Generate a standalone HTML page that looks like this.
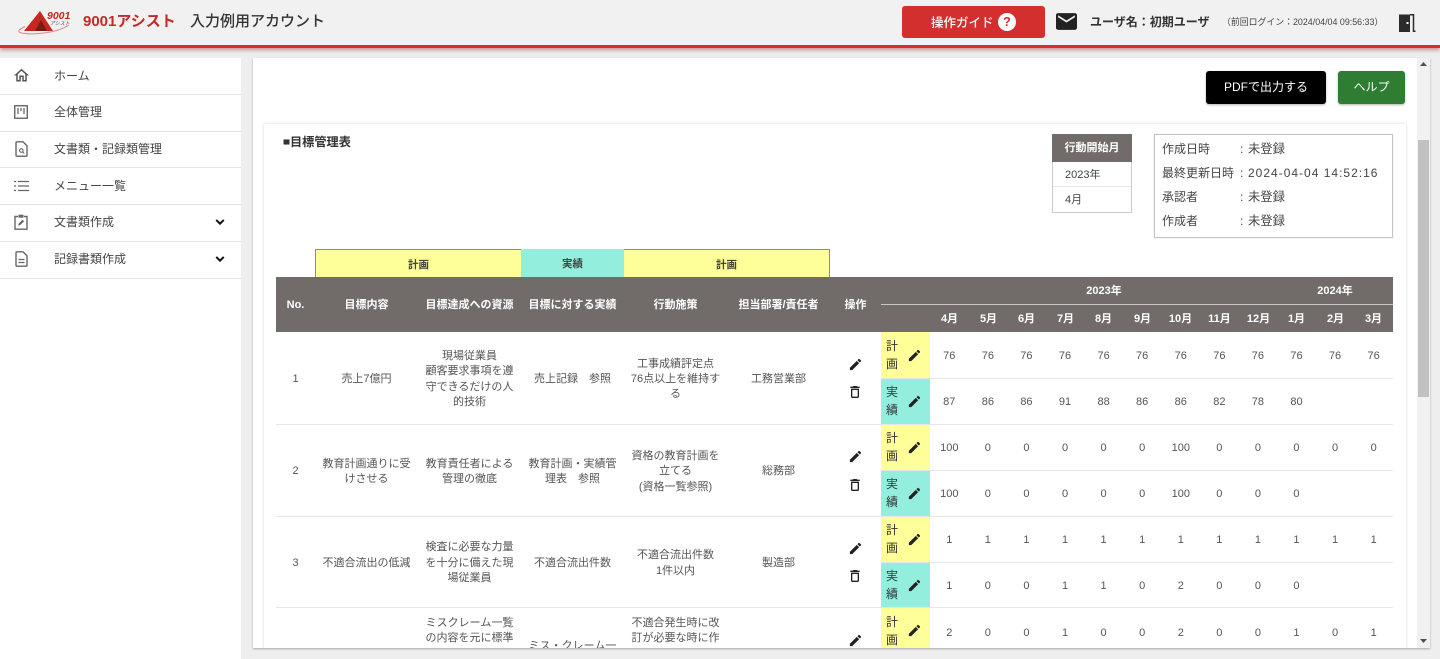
<!DOCTYPE html>
<html lang="ja">
<head>
<meta charset="utf-8">
<title>目標管理表</title>
<style>
*{box-sizing:border-box}
html,body{margin:0;padding:0;width:1440px;height:659px;overflow:hidden;background:#eee;font-family:"Liberation Sans","Noto Sans CJK JP",sans-serif;color:#444}
.a{position:absolute;white-space:nowrap}
svg{display:block;position:absolute}
#hd{position:absolute;left:0;top:0;width:1440px;height:48px;background:#f1f1f1;border-bottom:3px solid #d32f2f;box-shadow:0 2px 4px rgba(170,50,50,.5);z-index:5}
#side{position:absolute;left:0;top:58px;width:241px;height:601px;background:#fff}
.mi{position:absolute;left:0;width:241px;border-bottom:1px solid #e4e4e4;font-size:12px;line-height:36px;height:37px;padding-left:54px;color:#444}
#card{position:absolute;left:253px;top:58px;width:1177px;height:590px;overflow:hidden;background:#fff;box-shadow:0 1px 2px rgba(0,0,0,.3)}
#in{position:absolute;left:-253px;top:-58px;width:1440px;height:659px}
table{border-collapse:collapse;table-layout:fixed;position:absolute;left:276px;top:332px;width:1117px;font-size:11px;color:#555}
td{padding:4px 0 0;text-align:center;vertical-align:middle;height:46px;border-bottom:1px solid #e6e6e6;line-height:15.4px;position:relative}
td.y{background:#ffff99}
td.g{background:#93eedd}
td.k{text-align:left;padding:0 0 0 5px;font-size:12px;line-height:18px;color:#333}
td svg{position:absolute}
tr.s td{height:45px}
tr.r td:not(.k){padding-top:6px}
.th{position:absolute;color:#fff;font-weight:bold;font-size:11px;line-height:14px;text-align:center;white-space:nowrap}
.tp{position:absolute;top:249px;height:28px;font-size:10.5px;font-weight:bold;line-height:30px;text-align:center;color:#444}
</style>
</head>
<body>
<div id="side">
  <div class="mi" style="top:0">ホーム</div>
  <div class="mi" style="top:37px;line-height:35px">全体管理</div>
  <div class="mi" style="top:73px">文書類・記録類管理</div>
  <div class="mi" style="top:110px">メニュー一覧</div>
  <div class="mi" style="top:147px;line-height:35px">文書類作成</div>
  <div class="mi" style="top:184px;line-height:35px">記録書類作成</div>
  <svg style="left:14px;top:10px" width="15" height="15" viewBox="2 3 20 18"><path fill="#555" d="M12 5.69l5 4.5V18h-2v-6H9v6H7v-7.81l5-4.5M12 3L2 12h3v8h6v-6h2v6h6v-8h3L12 3z"/></svg>
  <svg style="left:14px;top:47px" width="14" height="14" viewBox="0 0 14 14"><rect x=".75" y=".75" width="12.5" height="12.5" fill="none" stroke="#666" stroke-width="1.4"/><path d="M4 3v6M7 3v3M10 3v6" stroke="#666" stroke-width="1.3"/></svg>
  <svg style="left:15px;top:83px" width="13" height="16" viewBox="0 0 13 16"><path d="M1 1.8q0-1 1-1h6l4 4v9.4q0 1-1 1H2q-1 0-1-1z" fill="none" stroke="#666" stroke-width="1.4"/><circle cx="6.3" cy="9.5" r="1.8" fill="none" stroke="#666" stroke-width="1.1"/><path d="M7.6 10.8l1.7 1.7" stroke="#666" stroke-width="1.1"/></svg>
  <svg style="left:14px;top:122px" width="15" height="12" viewBox="0 0 15 12"><path d="M4 1.5h11M4 6h11M4 10.5h11" stroke="#666" stroke-width="1.2"/><path d="M0 1.5h2M0 6h2M0 10.5h2" stroke="#666" stroke-width="1.3"/></svg>
  <svg style="left:14px;top:156px" width="14" height="16" viewBox="0 0 14 16"><path d="M4 2.5H1v12.7h12V2.5h-3" fill="none" stroke="#666" stroke-width="1.4"/><rect x="4.5" y=".7" width="5" height="3" fill="#666"/><path d="M4 11.8l1-2.6 3.5-3.5 1.6 1.6-3.5 3.5z" fill="#666"/></svg>
  <svg style="left:15px;top:193px" width="13" height="16" viewBox="0 0 13 16"><path d="M1 1.8q0-1 1-1h6l4 4v9.4q0 1-1 1H2q-1 0-1-1z" fill="none" stroke="#666" stroke-width="1.4"/><path d="M3.5 8.5h6M3.5 11.5h6" stroke="#666" stroke-width="1.2"/></svg>
  <svg style="left:212px;top:156px" width="16" height="16" viewBox="0 0 24 24"><path fill="#111" d="M16.59 8.59L12 13.17 7.41 8.59 6 10l6 6 6-6z" stroke="#111" stroke-width="1"/></svg>
  <svg style="left:212px;top:193px" width="16" height="16" viewBox="0 0 24 24"><path fill="#111" d="M16.59 8.59L12 13.17 7.41 8.59 6 10l6 6 6-6z" stroke="#111" stroke-width="1"/></svg>
</div>

<div id="card"><div id="in">
  <div class="a" style="left:1206px;top:71px;width:120px;height:33px;background:#000;border-radius:3px;box-shadow:0 1px 2px rgba(0,0,0,.3);color:#fff;font-size:12px;line-height:32px;text-align:center">PDFで出力する</div>
  <div class="a" style="left:1338px;top:71px;width:67px;height:33px;background:#2e7d32;border-radius:3px;box-shadow:0 1px 2px rgba(0,0,0,.3);color:#fff;font-size:12px;line-height:32px;text-align:center">ヘルプ</div>

  <div class="a" style="left:264px;top:124px;width:1142px;height:540px;background:#fff;box-shadow:0 0 3px rgba(0,0,0,.18)"></div>
  <div class="a" style="left:283px;top:134px;font-size:12.2px;font-weight:bold;line-height:16px;color:#333"><span style="display:inline-block;width:7px;height:6px;background:#333;margin-right:0;vertical-align:1px;transform:scale(.85)"></span>目標管理表</div>

  <div class="a" style="left:1052px;top:134px;width:80px;height:79px;border:1px solid #ccc;border-top:0;font-size:11px;color:#444">
    <div style="margin:0 -1px;height:28px;background:#716b6a;color:#fff;font-weight:bold;text-align:center;line-height:29px">行動開始月</div>
    <div style="height:25px;line-height:27px;padding-left:12px;border-bottom:1px solid #e5e5e5">2023年</div>
    <div style="height:25px;line-height:27px;padding-left:12px">4月</div>
  </div>

  <div class="a" style="left:1154px;top:134px;width:239px;height:104px;border:1px solid #c4c4c4;box-shadow:0 0 1px #ccc"></div>
  <div class="a" style="left:1162px;top:141px;font-size:12px;line-height:16px;color:#444">作成日時</div>
  <div class="a" style="left:1240px;top:141px;font-size:12px;line-height:16px;color:#444">:</div>
  <div class="a" style="left:1248px;top:141px;font-size:12.3px;line-height:16px;color:#444">未登録</div>
  <div class="a" style="left:1162px;top:165px;font-size:12px;line-height:16px;color:#444">最終更新日時</div>
  <div class="a" style="left:1240px;top:165px;font-size:12px;line-height:16px;color:#444">:</div>
  <div class="a" style="left:1248px;top:165px;font-size:12px;line-height:16px;letter-spacing:1px;color:#444">2024-04-04 14:52:16</div>
  <div class="a" style="left:1162px;top:189px;font-size:12px;line-height:16px;color:#444">承認者</div>
  <div class="a" style="left:1240px;top:189px;font-size:12px;line-height:16px;color:#444">:</div>
  <div class="a" style="left:1248px;top:189px;font-size:12.3px;line-height:16px;color:#444">未登録</div>
  <div class="a" style="left:1162px;top:213px;font-size:12px;line-height:16px;color:#444">作成者</div>
  <div class="a" style="left:1240px;top:213px;font-size:12px;line-height:16px;color:#444">:</div>
  <div class="a" style="left:1248px;top:213px;font-size:12.3px;line-height:16px;color:#444">未登録</div>

  <div class="tp" style="left:315px;width:206px;background:#ffff99;border:1px solid #8f8f70;border-bottom:0;border-right:0">計画</div>
  <div class="tp" style="left:521px;width:103px;background:#93eedd">実績</div>
  <div class="tp" style="left:624px;width:206px;background:#ffff99;border:1px solid #8f8f70;border-bottom:0;border-left:0">計画</div>

  <div class="a" style="left:276px;top:277px;width:1117px;height:55px;background:#716b6a"></div>
  <div class="a" style="left:881px;top:304px;width:512px;height:1px;background:#c9c6c5"></div>
  <div class="th" style="left:276px;width:39px;top:298px">No.</div>
  <div class="th" style="left:315px;width:103px;top:298px">目標内容</div>
  <div class="th" style="left:418px;width:103px;top:298px">目標達成への資源</div>
  <div class="th" style="left:521px;width:103px;top:298px">目標に対する実績</div>
  <div class="th" style="left:624px;width:103px;top:298px">行動施策</div>
  <div class="th" style="left:727px;width:103px;top:298px">担当部署/責任者</div>
  <div class="th" style="left:830px;width:51px;top:298px">操作</div>
  <div class="th" style="left:1064px;width:80px;top:284px">2023年</div>
  <div class="th" style="left:1295px;width:80px;top:284px">2024年</div>
  <div class="th" style="left:930px;width:39px;top:312px">4月</div>
  <div class="th" style="left:969px;width:39px;top:312px">5月</div>
  <div class="th" style="left:1007px;width:39px;top:312px">6月</div>
  <div class="th" style="left:1046px;width:39px;top:312px">7月</div>
  <div class="th" style="left:1084px;width:39px;top:312px">8月</div>
  <div class="th" style="left:1123px;width:39px;top:312px">9月</div>
  <div class="th" style="left:1161px;width:39px;top:312px">10月</div>
  <div class="th" style="left:1200px;width:39px;top:312px">11月</div>
  <div class="th" style="left:1239px;width:39px;top:312px">12月</div>
  <div class="th" style="left:1277px;width:39px;top:312px">1月</div>
  <div class="th" style="left:1316px;width:39px;top:312px">2月</div>
  <div class="th" style="left:1354px;width:39px;top:312px">3月</div>

  <table>
    <colgroup><col style="width:39px"><col style="width:103px"><col style="width:103px"><col style="width:103px"><col style="width:103px"><col style="width:103px"><col style="width:51px"><col style="width:49px"><col span="12" style="width:38.58px"></colgroup>
    <tr>
      <td rowspan="2">1</td><td rowspan="2">売上7億円</td><td rowspan="2">現場従業員<br>顧客要求事項を遵<br>守できるだけの人<br>的技術</td><td rowspan="2">売上記録　参照</td><td rowspan="2">工事成績評定点<br>76点以上を維持す<br>る</td><td rowspan="2">工務営業部</td>
      <td rowspan="2"><svg style="left:18px;top:25px" width="15" height="15" viewBox="0 0 24 24"><path fill="#222" d="M3 17.25V21h3.75L17.81 9.94l-3.75-3.75L3 17.25zM20.71 7.04c.39-.39.39-1.02 0-1.41l-2.34-2.34c-.39-.39-1.02-.39-1.41 0l-1.83 1.83 3.75 3.75 1.83-1.83z"/></svg><svg style="left:17px;top:52px" width="16" height="16" viewBox="0 0 24 24"><path fill="#222" d="M6 19c0 1.1.9 2 2 2h8c1.1 0 2-.9 2-2V7H6v12zM8 9h8v10H8V9zm7.5-5l-1-1h-5l-1 1H5v2h14V4h-3.5z"/></svg></td>
      <td class="y k">計<br>画<svg style="left:26px;top:16px" width="15" height="15" viewBox="0 0 24 24"><path fill="#222" d="M3 17.25V21h3.75L17.81 9.94l-3.75-3.75L3 17.25zM20.71 7.04c.39-.39.39-1.02 0-1.41l-2.34-2.34c-.39-.39-1.02-.39-1.41 0l-1.83 1.83 3.75 3.75 1.83-1.83z"/></svg></td>
      <td>76</td><td>76</td><td>76</td><td>76</td><td>76</td><td>76</td><td>76</td><td>76</td><td>76</td><td>76</td><td>76</td><td>76</td>
    </tr>
    <tr>
      <td class="g k">実<br>績<svg style="left:26px;top:15px" width="15" height="15" viewBox="0 0 24 24"><path fill="#222" d="M3 17.25V21h3.75L17.81 9.94l-3.75-3.75L3 17.25zM20.71 7.04c.39-.39.39-1.02 0-1.41l-2.34-2.34c-.39-.39-1.02-.39-1.41 0l-1.83 1.83 3.75 3.75 1.83-1.83z"/></svg></td>
      <td>87</td><td>86</td><td>86</td><td>91</td><td>88</td><td>86</td><td>86</td><td>82</td><td>78</td><td>80</td><td></td><td></td>
    </tr>
    <tr>
      <td rowspan="2">2</td><td rowspan="2">教育計画通りに受<br>けさせる</td><td rowspan="2">教育責任者による<br>管理の徹底</td><td rowspan="2">教育計画・実績管<br>理表　参照</td><td rowspan="2">資格の教育計画を<br>立てる<br>(資格一覧参照)</td><td rowspan="2">総務部</td>
      <td rowspan="2"><svg style="left:18px;top:24px" width="15" height="15" viewBox="0 0 24 24"><path fill="#222" d="M3 17.25V21h3.75L17.81 9.94l-3.75-3.75L3 17.25zM20.71 7.04c.39-.39.39-1.02 0-1.41l-2.34-2.34c-.39-.39-1.02-.39-1.41 0l-1.83 1.83 3.75 3.75 1.83-1.83z"/></svg><svg style="left:17px;top:52px" width="16" height="16" viewBox="0 0 24 24"><path fill="#222" d="M6 19c0 1.1.9 2 2 2h8c1.1 0 2-.9 2-2V7H6v12zM8 9h8v10H8V9zm7.5-5l-1-1h-5l-1 1H5v2h14V4h-3.5z"/></svg></td>
      <td class="y k">計<br>画<svg style="left:26px;top:15px" width="15" height="15" viewBox="0 0 24 24"><path fill="#222" d="M3 17.25V21h3.75L17.81 9.94l-3.75-3.75L3 17.25zM20.71 7.04c.39-.39.39-1.02 0-1.41l-2.34-2.34c-.39-.39-1.02-.39-1.41 0l-1.83 1.83 3.75 3.75 1.83-1.83z"/></svg></td>
      <td>100</td><td>0</td><td>0</td><td>0</td><td>0</td><td>0</td><td>100</td><td>0</td><td>0</td><td>0</td><td>0</td><td>0</td>
    </tr>
    <tr>
      <td class="g k">実<br>績<svg style="left:26px;top:15px" width="15" height="15" viewBox="0 0 24 24"><path fill="#222" d="M3 17.25V21h3.75L17.81 9.94l-3.75-3.75L3 17.25zM20.71 7.04c.39-.39.39-1.02 0-1.41l-2.34-2.34c-.39-.39-1.02-.39-1.41 0l-1.83 1.83 3.75 3.75 1.83-1.83z"/></svg></td>
      <td>100</td><td>0</td><td>0</td><td>0</td><td>0</td><td>0</td><td>100</td><td>0</td><td>0</td><td>0</td><td></td><td></td>
    </tr>
    <tr>
      <td rowspan="2">3</td><td rowspan="2">不適合流出の低減</td><td rowspan="2">検査に必要な力量<br>を十分に備えた現<br>場従業員</td><td rowspan="2">不適合流出件数</td><td rowspan="2">不適合流出件数<br>1件以内</td><td rowspan="2">製造部</td>
      <td rowspan="2"><svg style="left:18px;top:24px" width="15" height="15" viewBox="0 0 24 24"><path fill="#222" d="M3 17.25V21h3.75L17.81 9.94l-3.75-3.75L3 17.25zM20.71 7.04c.39-.39.39-1.02 0-1.41l-2.34-2.34c-.39-.39-1.02-.39-1.41 0l-1.83 1.83 3.75 3.75 1.83-1.83z"/></svg><svg style="left:17px;top:51px" width="16" height="16" viewBox="0 0 24 24"><path fill="#222" d="M6 19c0 1.1.9 2 2 2h8c1.1 0 2-.9 2-2V7H6v12zM8 9h8v10H8V9zm7.5-5l-1-1h-5l-1 1H5v2h14V4h-3.5z"/></svg></td>
      <td class="y k">計<br>画<svg style="left:26px;top:15px" width="15" height="15" viewBox="0 0 24 24"><path fill="#222" d="M3 17.25V21h3.75L17.81 9.94l-3.75-3.75L3 17.25zM20.71 7.04c.39-.39.39-1.02 0-1.41l-2.34-2.34c-.39-.39-1.02-.39-1.41 0l-1.83 1.83 3.75 3.75 1.83-1.83z"/></svg></td>
      <td>1</td><td>1</td><td>1</td><td>1</td><td>1</td><td>1</td><td>1</td><td>1</td><td>1</td><td>1</td><td>1</td><td>1</td>
    </tr>
    <tr class="s">
      <td class="g k">実<br>績<svg style="left:26px;top:15px" width="15" height="15" viewBox="0 0 24 24"><path fill="#222" d="M3 17.25V21h3.75L17.81 9.94l-3.75-3.75L3 17.25zM20.71 7.04c.39-.39.39-1.02 0-1.41l-2.34-2.34c-.39-.39-1.02-.39-1.41 0l-1.83 1.83 3.75 3.75 1.83-1.83z"/></svg></td>
      <td>1</td><td>0</td><td>0</td><td>1</td><td>1</td><td>0</td><td>2</td><td>0</td><td>0</td><td>0</td><td></td><td></td>
    </tr>
    <tr class="r">
      <td></td><td></td>
      <td style="vertical-align:top;padding-top:8px">ミスクレーム一覧<br>の内容を元に標準</td>
      <td style="vertical-align:top;padding-top:31px">ミス・クレーム一</td>
      <td style="vertical-align:top;padding-top:8px">不適合発生時に改<br>訂が必要な時に作</td>
      <td></td>
      <td><svg style="left:18px;top:25px" width="15" height="15" viewBox="0 0 24 24"><path fill="#222" d="M3 17.25V21h3.75L17.81 9.94l-3.75-3.75L3 17.25zM20.71 7.04c.39-.39.39-1.02 0-1.41l-2.34-2.34c-.39-.39-1.02-.39-1.41 0l-1.83 1.83 3.75 3.75 1.83-1.83z"/></svg></td>
      <td class="y k">計<br>画<svg style="left:26px;top:15px" width="15" height="15" viewBox="0 0 24 24"><path fill="#222" d="M3 17.25V21h3.75L17.81 9.94l-3.75-3.75L3 17.25zM20.71 7.04c.39-.39.39-1.02 0-1.41l-2.34-2.34c-.39-.39-1.02-.39-1.41 0l-1.83 1.83 3.75 3.75 1.83-1.83z"/></svg></td>
      <td>2</td><td>0</td><td>0</td><td>1</td><td>0</td><td>0</td><td>2</td><td>0</td><td>0</td><td>1</td><td>0</td><td>1</td>
    </tr>
  </table>

  <div class="a" style="left:1417px;top:58px;width:13px;height:590px;background:#f1f1f1"></div>
  <div class="a" style="left:1418px;top:140px;width:11px;height:257px;background:#c1c1c1"></div>
  <svg style="left:1420px;top:62px" width="7" height="4" viewBox="0 0 7 4"><path d="M3.5 0L7 4H0z" fill="#505050"/></svg>
  <svg style="left:1420px;top:639px" width="7" height="4" viewBox="0 0 7 4"><path d="M0 0h7L3.5 4z" fill="#505050"/></svg>
</div></div>

<div id="hd">
  <svg style="left:18px;top:9px" width="54" height="26" viewBox="0 0 54 26">
    <path d="M7 17.500Q-2 22 2 23.500Q10 26 26 24Q42 22 51 16" fill="none" stroke="#dc8a85" stroke-width="1"/>
    <path d="M22 2L6 22h29z" fill="#c5281f"/>
    <path d="M23 11l-6 11h12z" fill="#7a1c16"/>
    <text x="29" y="10" font-family="Liberation Sans" font-size="10.500" font-weight="bold" font-style="italic" fill="#c5281f">9001</text>
    <text x="32" y="16" font-family="Liberation Sans,Noto Sans CJK JP,sans-serif" font-size="5" font-style="italic" fill="#444">アシスト</text>
  </svg>
  <div class="a" style="left:83px;top:12px;font-size:15px;font-weight:bold;line-height:20px;color:#c62828">9001アシスト</div>
  <div class="a" style="left:190px;top:12px;font-size:15px;font-weight:500;line-height:20px;color:#333">入力例用アカウント</div>
  <div class="a" style="left:902px;top:6px;width:143px;height:32px;background:#d32f2f;border-radius:3px"></div>
  <div class="a" style="left:931px;top:15px;font-size:12.500px;font-weight:500;line-height:17px;color:#fff">操作ガイド</div>
  <div class="a" style="left:998px;top:13px;width:18px;height:18px;border-radius:50%;background:#fff;color:#d32f2f;font-size:13px;font-weight:bold;line-height:18px;text-align:center">?</div>
  <svg style="left:1056px;top:13px" width="21" height="17" viewBox="2 4 20 16"><path fill="#222" d="M20 4H4c-1.100 0-2 .9-2 2v12c0 1.100.9 2 2 2h16c1.100 0 2-.9 2-2V6c0-1.100-.9-2-2-2zm0 4l-8 5-8-5V6l8 5 8-5v2z"/></svg>
  <div class="a" style="left:1090px;top:14px;font-size:12px;font-weight:bold;line-height:17px;color:#333">ユーザ名：初期ユーザ</div>
  <div class="a" style="left:1222px;top:16px;font-size:8.900px;line-height:13px;color:#444">（前回ログイン：2024/04/04 09:56:33）</div>
  <svg style="left:1399px;top:14px" width="17" height="18" viewBox="0 0 17 18"><path d="M0 .5h11V18H0z" fill="#2b2b2b"/><rect x="7.500" y="8" width="2" height="2" fill="#fff"/><path d="M11 .75h3.500v16.500h2" fill="none" stroke="#2b2b2b" stroke-width="1.500"/></svg>
</div>
</body>
</html>
